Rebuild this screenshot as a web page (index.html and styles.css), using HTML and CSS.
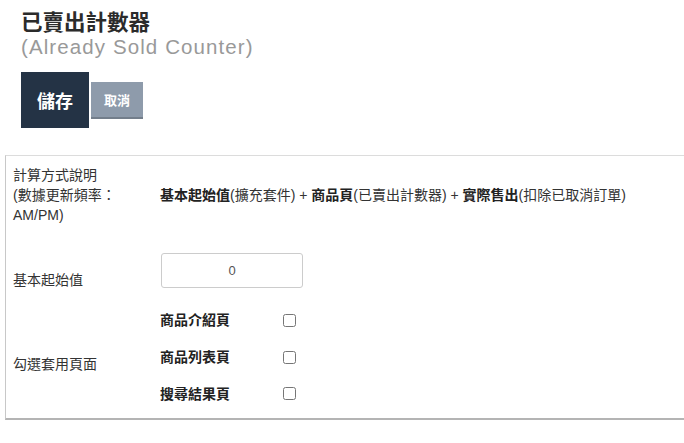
FILE: index.html
```html
<!DOCTYPE html>
<html lang="zh-Hant">
<head>
<meta charset="utf-8">
<title>已賣出計數器</title>
<link rel="stylesheet" href="styles.css">
</head>
<body>
<header class="page-head">
  <h1 class="title">已賣出計數器</h1>
  <div class="subtitle">(Already Sold Counter)</div>
  <div class="actions">
    <button class="btn btn-save" type="button">儲存</button>
    <button class="btn btn-cancel" type="button">取消</button>
  </div>
</header>
<section class="panel">
  <div class="row row-formula">
    <div class="label">計算方式說明<br>(數據更新頻率：<br>AM/PM)</div>
    <div class="value formula"><b>基本起始值</b>(擴充套件) + <b>商品頁</b>(已賣出計數器) + <b>實際售出</b>(扣除已取消訂單)</div>
  </div>
  <div class="row row-base">
    <div class="label label-base">基本起始值</div>
    <div class="value"><input class="num-input" type="text" value="0"></div>
  </div>
  <div class="row row-pages">
    <div class="label label-pages">勾選套用頁面</div>
    <div class="value checks">
      <label class="check-item"><span class="check-text">商品介紹頁</span><input type="checkbox" class="check"></label>
      <label class="check-item"><span class="check-text">商品列表頁</span><input type="checkbox" class="check"></label>
      <label class="check-item"><span class="check-text">搜尋結果頁</span><input type="checkbox" class="check"></label>
    </div>
  </div>
</section>
</body>
</html>
```
FILE: styles.css
```css
html, body {
  margin: 0;
  padding: 0;
  background: #fff;
}
body {
  font-family: "Liberation Sans", "Noto Sans CJK TC", sans-serif;
  color: #333;
}
.page-head {
  padding: 10px 0 0 21px;
}
.title {
  margin: 0;
  font-size: 21.5px;
  line-height: 26px;
  font-weight: 700;
  color: #2b2b2b;
}
.subtitle {
  font-size: 20.5px;
  line-height: 22px;
  letter-spacing: 1.1px;
  color: #999;
}
.actions {
  display: flex;
  align-items: center;
  gap: 2px;
  margin-top: 14px;
}
.btn {
  border: none;
  margin: 0;
  padding: 0;
  font-family: "Liberation Sans", "Noto Sans CJK TC", sans-serif;
  color: #fff;
  font-weight: 700;
  cursor: pointer;
}
.btn-save {
  width: 68px;
  height: 56px;
  background: #243345;
  font-size: 18px;
}
.btn-cancel {
  width: 52px;
  height: 37px;
  background: #8e9bab;
  border-bottom: 2px solid #737e8b;
  font-size: 13px;
  margin-top: 1px;
}
.panel {
  margin: 27px 0 0 5px;
  border-top: 1px solid #dcdcdc;
  border-left: 1px solid #c8c8c8;
  border-bottom: 2px solid #b4b4b4;
  font-size: 14px;
  line-height: 20px;
}
.row {
  display: grid;
  grid-template-columns: 154px 1fr;
}
.label {
  padding-left: 7px;
  color: #333;
}
.row-formula {
  align-items: center;
  padding: 9px 0 11px;
}
.formula {
  color: #333;
}
.formula b {
  color: #222;
}
.row-base {
  align-items: end;
  padding: 17px 0 14px;
}
.label-base {
  margin-bottom: -2px;
}
.num-input {
  box-sizing: border-box;
  width: 142px;
  height: 35px;
  border: 1px solid #ccc;
  border-radius: 3px;
  text-align: center;
  font-family: "Liberation Sans", "Noto Sans CJK TC", sans-serif;
  font-size: 13px;
  color: #555;
  margin: 0 0 0 1px;
  padding: 0;
  display: block;
}
.row-pages {
  align-items: center;
  padding-bottom: 6px;
}
.label-pages {
  padding-top: 13px;
}
.checks {
  display: flex;
  flex-direction: column;
}
.check-item {
  display: flex;
  align-items: center;
  height: 36.7px;
}
.check-text {
  width: 123px;
  font-weight: 700;
  color: #222;
}
.check {
  margin: 0;
  width: 13px;
  height: 13px;
}
```
